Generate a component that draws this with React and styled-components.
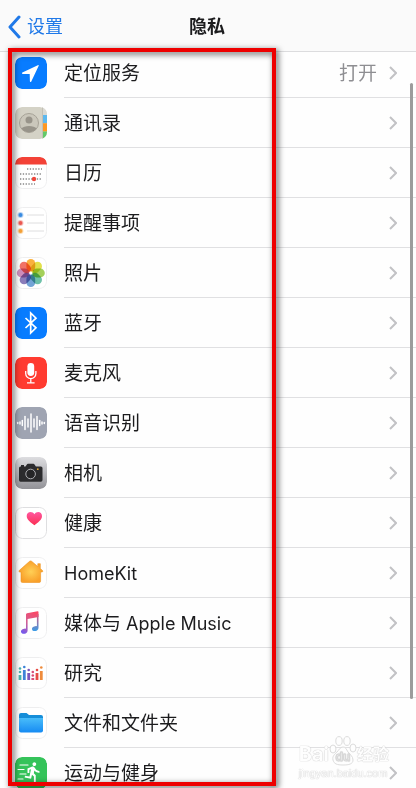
import React from "react";
import styled, { createGlobalStyle } from "styled-components";
import { MdDirectionsRun } from "react-icons/md";

const GlobalStyle = createGlobalStyle`
  * { box-sizing: border-box; }
  body {
    margin: 0;
    background: #fefefe;
    color: #1c1c1e;
    font-family: Inter, "Noto Sans CJK SC", sans-serif;
  }
`;

const Page = styled.div`
  position: relative;
  height: 100vh;
  overflow: hidden;
`;

const Header = styled.header`
  position: relative;
  z-index: 1;
  display: grid;
  grid-template-columns: 1fr auto 1fr;
  align-items: center;
  height: 52px;
  margin-bottom: -4px;
  padding: 2px 10px 0 8px;
  background: #fafafa;
  border-bottom: 1px solid #dcdcde;
`;

const BackLink = styled.a`
  display: flex;
  align-items: center;
  gap: 6px;
  color: #2079e8;
  font-size: 18px;
  line-height: 24px;
  text-decoration: none;
`;

const Title = styled.h1`
  margin: 0;
  font-size: 18px;
  line-height: 24px;
  font-weight: 700;
`;

const List = styled.ul`
  margin: 0;
  padding: 0;
  list-style: none;
`;

const RowLink = styled.a`
  display: flex;
  align-items: center;
  height: 50px;
  padding-left: 15px;
  color: inherit;
  text-decoration: none;
`;

const RowIcon = styled.svg`
  flex: none;
  width: 32px;
  height: 32px;
  margin-right: 17px;
  border-radius: 7px;
`;

const RowBody = styled.span`
  flex: 1;
  display: flex;
  align-items: center;
  height: 100%;
  padding-right: 19px;
  border-bottom: 1px solid #e0e0e2;
`;

const Label = styled.span`
  flex: 1;
  padding-top: 3px;
  font-size: 19px;
  line-height: 28px;
`;

const Latin = styled.span`
  font-size: 18px;
`;

const Value = styled.span`
  margin-right: 12px;
  padding-top: 3px;
  color: #8e8e92;
  font-size: 19px;
  line-height: 28px;
`;

const ScrollThumb = styled.div`
  position: absolute;
  top: 83px;
  right: 3px;
  bottom: 89px;
  width: 3px;
  border-radius: 2px;
  background: #9c9c9c;
`;

const Highlight = styled.div`
  position: absolute;
  z-index: 2;
  top: 48px;
  bottom: 2px;
  left: 8px;
  width: 268px;
  border: 4px solid #ee0000;
  filter: drop-shadow(2px 2px 3px rgba(0, 0, 0, 0.7));
  pointer-events: none;
`;

const Watermark = styled.div`
  position: absolute;
  right: 27px;
  bottom: 8px;
  color: #fefefe;
  text-shadow: 0 0 1px #c4c4c4, 0 0 1px #d0d0d0;
  pointer-events: none;
`;

const Brand = styled.div`
  display: flex;
  align-items: flex-end;
  height: 32px;
  font-size: 20px;
  font-weight: 700;
  line-height: 24px;
`;

const BrandSuffix = styled.span`
  font-size: 16px;
`;

const Site = styled.div`
  font-size: 11px;
  line-height: 14px;
  font-family: "Liberation Sans", sans-serif;
`;

const Chevron = () => (
  <svg width="8" height="14" viewBox="0 0 8 14" fill="none" stroke="#c2c2c5" strokeWidth="2" aria-hidden="true">
    <path d="M1 1l6 6-6 6" />
  </svg>
);

const BackArrow = () => (
  <svg width="13" height="24" viewBox="0 0 13 24" fill="none" stroke="#2079e8" strokeWidth="3" strokeLinecap="round" strokeLinejoin="round" aria-hidden="true">
    <path d="M11 2L2 12l9 10" />
  </svg>
);

const Paw = () => (
  <svg width="28" height="30" viewBox="0 0 28 30" fill="#fefefe" stroke="#dcdcdc" aria-hidden="true">
    <ellipse cx="4" cy="13" rx="3" ry="4" />
    <ellipse cx="10" cy="5" rx="3.2" ry="4.4" />
    <ellipse cx="18" cy="5" rx="3.2" ry="4.4" />
    <ellipse cx="24" cy="12" rx="3" ry="4" />
    <path d="M14 11c-3 0-4 3-6 5s-5 4-4 8 4 5 10 5 10-1 10-5-3-5-5-8-2-5-5-5z" />
    <text x="14" y="25" textAnchor="middle" fontSize="12" fontWeight="600" strokeWidth="0.6">du</text>
  </svg>
);

const WhiteTile = ({ stroke = "#eeeeef" }) => (
  <rect x="0.5" y="0.5" width="31" height="31" rx="7" fill="#fff" stroke={stroke} />
);
const Tile = ({ fill }) => <rect width="32" height="32" rx="7" fill={fill} />;

const Petal = styled.rect`
  mix-blend-mode: multiply;
`;

const Flower = styled.g`
  isolation: isolate;
`;

const petals = ["#f9a21b", "#dedb2b", "#94c83d", "#55b69a", "#5a94cf", "#7666ae", "#c57ab0", "#ee5a4b"];
const waves = [[2.7, 1], [5, 2], [7.3, 5], [10, 13], [13, 8], [16, 18], [19, 8], [22, 13], [24.7, 5], [27, 2], [29.3, 1]];
const columns = [
  ["#48b4b0", 5, [11.5, 15], 18],
  ["#3d82d8", 9.3, [10], 13],
  ["#7d55ba", 13.7, [13], 16],
  ["#d94d77", 17.8, [15, 18.5], 21],
  ["#e64c45", 22, [13], 16],
  ["#ef8b3b", 26.3, [10.5], 14],
];

const icons = {
  location: (
    <>
      <Tile fill="#087cff" />
      <path d="M22.8 8.2L7.4 15.6c-.6.3-.5 1.3.3 1.3l7 .2.2 7.2c0 .8 1 1 1.4.2l7.3-15.6c.3-.6-.2-1-.8-.7z" fill="#fff" />
    </>
  ),
  contacts: (
    <>
      <Tile fill="#d4d2c6" />
      <path d="M28 0h4v8h-4z" fill="#dad9d2" />
      <path d="M28 8h4v8.3h-4z" fill="#5cb8ee" />
      <path d="M28 16.3h4v8.2h-4z" fill="#ff9720" />
      <path d="M28 24.5h4V32h-4z" fill="#62c969" />
      <path d="M27.5 0v32" stroke="#c2c0b5" />
      <circle cx="14" cy="16" r="9.5" fill="#cac7bb" stroke="#a6a297" />
      <circle cx="14" cy="13" r="3.5" fill="#98948a" />
      <path d="M6.5 21.5c2-3.5 13-3.5 15 0-3 5-12 5-15 0z" fill="#98948a" />
    </>
  ),
  calendar: (
    <>
      <WhiteTile />
      <path d="M0 7.5V7a7 7 0 017-7h18a7 7 0 017 7v.5z" fill="#f34237" />
      <g stroke="#4c4c4c" strokeWidth="1.2" strokeDasharray="1.3 1.5">
        <path d="M12 12h15M5 17h22M5 22h22M5 27h15" />
      </g>
      <circle cx="19" cy="22" r="2.2" fill="#ef463b" />
    </>
  ),
  reminders: (
    <>
      <WhiteTile />
      <path d="M12 8h17M12 16h17M12 24h17" stroke="#dededf" />
      {[["#3b8de3", 8], ["#ec5a53", 16], ["#f5a239", 24]].map(([c, y]) => (
        <g key={c}>
          <circle cx="5.5" cy={y} r="3" fill={c} opacity="0.35" />
          <circle cx="5.5" cy={y} r="2" fill={c} />
        </g>
      ))}
    </>
  ),
  photos: (
    <>
      <WhiteTile />
      <Flower>
        {petals.map((c, i) => (
          <Petal key={c} x="11.4" y="2" width="8.800" height="12.500" rx="4.400" fill={c} fillOpacity="0.85" transform={`rotate(${i * 45} 15.8 16)`} />
        ))}
      </Flower>
      <circle cx="15.8" cy="16" r="1" fill="#fff" />
    </>
  ),
  bluetooth: (
    <>
      <Tile fill="#087cff" />
      <path d="M10.5 11L21 20.8 15.7 26V6L21 11.2 10.5 21" fill="none" stroke="#fff" strokeWidth="1.7" />
    </>
  ),
  microphone: (
    <>
      <Tile fill="#ff3b30" />
      <rect x="12.400" y="6" width="6.800" height="13" rx="3.400" fill="#fff" />
      <path d="M10.7 14v2.5a5.1 5.1 0 0010.2 0V14M15.8 21.6v3.9M12 25.8h7.6" fill="none" stroke="#fff" strokeWidth="1.3" />
    </>
  ),
  speech: (
    <>
      <Tile fill="#9fa4b2" />
      {waves.map(([x, h]) => (
        <path key={x} d={`M${x} ${16 - h / 2}v${h}`} stroke="#fff" strokeWidth="1.5" strokeLinecap="round" />
      ))}
    </>
  ),
  camera: (
    <>
      <linearGradient id="camera-tile" x2="0" y2="1">
        <stop stopColor="#dddde0" />
        <stop offset="1" stopColor="#929297" />
      </linearGradient>
      <Tile fill="url(#camera-tile)" />
      <path d="M5.5 9.5h5l1.4-2.1q.4-.6 1-.6h5.6q.6 0 1 .6l1.4 2.1h5q1.6 0 1.6 1.6v12q0 1.6-1.6 1.6H5.5q-1.5 0-1.5-1.6v-12q0-1.6 1.5-1.6zM6 8h3v2H6z" fill="#2b2b2d" />
      <circle cx="15.6" cy="17" r="4.8" fill="#252527" stroke="#b1b1b5" />
      <circle cx="22.8" cy="12.2" r="0.9" fill="#e1a733" />
    </>
  ),
  health: (
    <>
      <linearGradient id="health-heart" x2="0" y2="1">
        <stop stopColor="#ff57a0" />
        <stop offset="1" stopColor="#fb2f52" />
      </linearGradient>
      <WhiteTile stroke="#dedee0" />
      <path d="M19.4 18.3C16 15.7 11.7 12.8 11.7 9c0-4.6 5.7-5.4 7.7-1.7C21.4 3.6 27 4.4 27 9c0 3.8-4.2 6.7-7.6 9.3z" fill="url(#health-heart)" />
    </>
  ),
  home: (
    <>
      <radialGradient id="home-house">
        <stop stopColor="#ffd056" />
        <stop offset="1" stopColor="#f9a02a" />
      </radialGradient>
      <WhiteTile />
      <path d="M14.6 4.3q1-.8 2 0l6.2 5.2V6.7h2.5v4.9l2.2 1.9q.9 1.3-.5 1.5h-1.4v9q0 1.5-1.5 1.5H7.5Q6 25.5 6 24v-9H4.7q-1.4-.2-.5-1.5z" fill="url(#home-house)" stroke="#ee9320" strokeWidth="0.6" />
    </>
  ),
  music: (
    <>
      <linearGradient id="music-note" x1="0.7" x2="0.2" y2="1">
        <stop stopColor="#fa4867" />
        <stop offset="0.55" stopColor="#cf6196" />
        <stop offset="1" stopColor="#7559ed" />
      </linearGradient>
      <linearGradient id="music-stem" x2="0" y2="1">
        <stop stopColor="#e55375" />
        <stop offset="1" stopColor="#389de8" />
      </linearGradient>
      <WhiteTile />
      <path d="M11 7.5q0-1 1-1.2l10.5-2q1-.2 1 .8v5L12.6 12v11.5c0 4-6.6 4.5-6.6 1 0-2.3 2.5-2.5 5-3z" fill="url(#music-note)" />
      <path d="M21.9 7h1.6v14c0 3.7-6.5 4.2-6.5.9 0-2.2 2.4-2.4 4.9-2.9z" fill="url(#music-stem)" />
    </>
  ),
  research: (
    <>
      <WhiteTile />
      {columns.map(([c, x, dots, top]) => (
        <g key={c} fill={c} stroke={c}>
          {dots.map((y) => <circle key={y} cx={x} cy={y} r="1.3" stroke="none" />)}
          <path d={`M${x} ${top}V23`} strokeWidth="2.8" />
        </g>
      ))}
    </>
  ),
  files: (
    <>
      <linearGradient id="files-folder" x2="0" y2="1">
        <stop stopColor="#49bdfa" />
        <stop offset="1" stopColor="#168bf3" />
      </linearGradient>
      <WhiteTile />
      <path d="M4 8q0-2 2-2h5.5l2.5 2h12q2 0 2 2v5H4z" fill="#168ed9" />
      <path d="M4 11h24v12.5q0 2-2 2H6q-2 0-2-2z" fill="url(#files-folder)" />
    </>
  ),
  fitness: (
    <>
      <Tile fill="#35c35a" />
      <MdDirectionsRun x="7" y="4" size={22} color="#fff" />
      <path d="M5 8h8M3 12.5h6M5 17h6M3 22h5" stroke="#fff" strokeWidth="1.2" strokeLinecap="round" />
    </>
  ),
};

const rows = [
  { icon: "location", label: "定位服务", value: "打开" },
  { icon: "contacts", label: "通讯录" },
  { icon: "calendar", label: "日历" },
  { icon: "reminders", label: "提醒事项" },
  { icon: "photos", label: "照片" },
  { icon: "bluetooth", label: "蓝牙" },
  { icon: "microphone", label: "麦克风" },
  { icon: "speech", label: "语音识别" },
  { icon: "camera", label: "相机" },
  { icon: "health", label: "健康" },
  { icon: "home", label: <Latin>HomeKit</Latin> },
  { icon: "music", label: <>媒体与<Latin> Apple Music</Latin></> },
  { icon: "research", label: "研究" },
  { icon: "files", label: "文件和文件夹" },
  { icon: "fitness", label: "运动与健身" },
];

export default function App() {
  return (
    <Page>
      <GlobalStyle />
      <Header>
        <BackLink href="#settings">
          <BackArrow />
          设置
        </BackLink>
        <Title>隐私</Title>
      </Header>
      <main>
        <List>
          {rows.map(({ icon, label, value }) => (
            <li key={icon}>
              <RowLink href={`#${icon}`}>
                <RowIcon viewBox="0 0 32 32" aria-hidden="true">{icons[icon]}</RowIcon>
                <RowBody>
                  <Label>{label}</Label>
                  {value && <Value>{value}</Value>}
                  <Chevron />
                </RowBody>
              </RowLink>
            </li>
          ))}
        </List>
      </main>
      <ScrollThumb />
      <Watermark>
        <Brand>
          Bai
          <Paw />
          <BrandSuffix>经验</BrandSuffix>
        </Brand>
        <Site>jingyan.baidu.com</Site>
      </Watermark>
      <Highlight />
    </Page>
  );
}
